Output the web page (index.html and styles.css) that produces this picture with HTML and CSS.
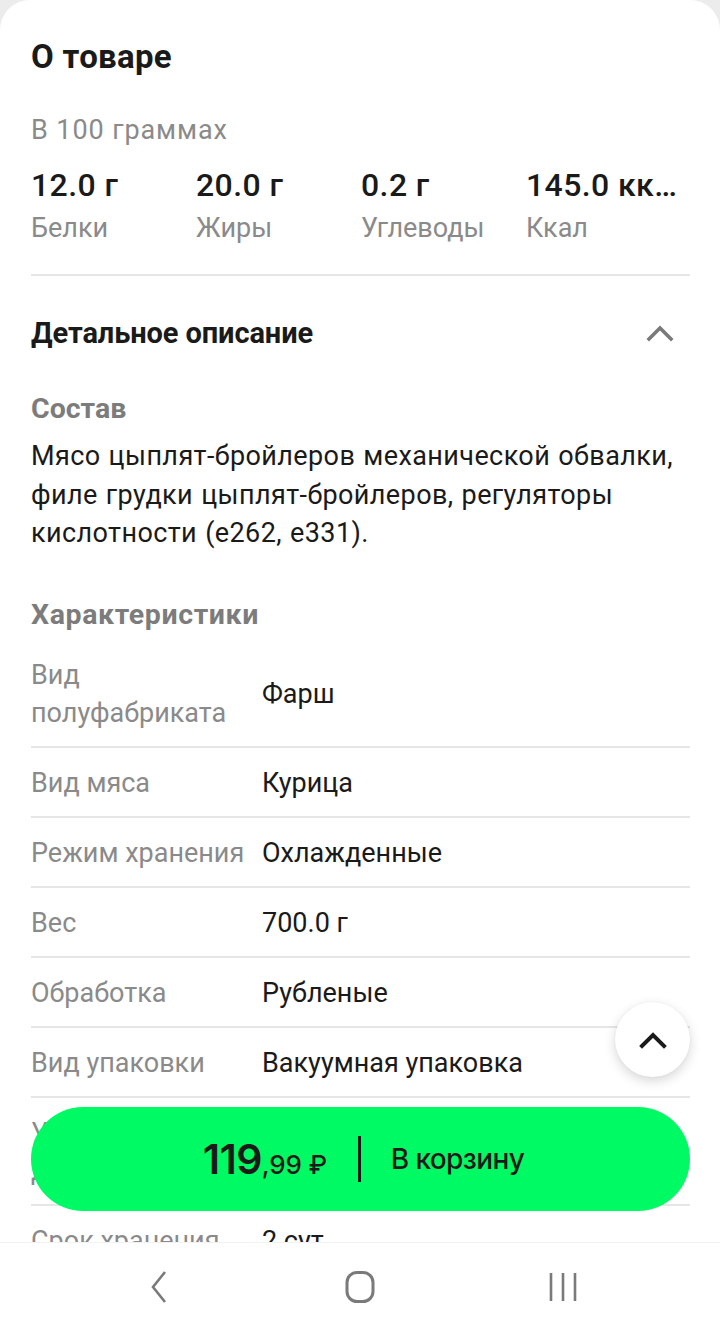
FILE: index.html
```html
<!DOCTYPE html>
<html lang="ru">
<head>
<meta charset="utf-8">
<title>О товаре</title>
<link rel="stylesheet" href="styles.css">
</head>
<body>
<div class="screen">
  <main class="card">
    <h1 class="title">О товаре</h1>
    <div class="per100">В 100 граммах</div>
    <div class="nutrients">
      <div class="nutrient"><div class="nv">12.0 г</div><div class="nl">Белки</div></div>
      <div class="nutrient"><div class="nv">20.0 г</div><div class="nl">Жиры</div></div>
      <div class="nutrient"><div class="nv">0.2 г</div><div class="nl">Углеводы</div></div>
      <div class="nutrient"><div class="nv">145.0 ккал</div><div class="nl">Ккал</div></div>
    </div>
    <div class="sep"></div>
    <div class="acc-head">
      <h2 class="acc-title">Детальное описание</h2>
      <svg class="acc-chevron" width="28" height="18" viewBox="0 0 28 18"><path d="M3 15 L14 4 L25 15" fill="none" stroke="#7a7a7a" stroke-width="3.6" stroke-linecap="square" stroke-linejoin="miter"/></svg>
    </div>
    <h3 class="sub">Состав</h3>
    <p class="composition">Мясо цыплят-бройлеров механической обвалки, филе грудки цыплят-бройлеров, регуляторы кислотности (e262, e331).</p>
    <h3 class="sub sub-specs">Характеристики</h3>
    <div class="specs">
      <div class="row"><div class="k">Вид<br>полуфабриката</div><div class="v">Фарш</div></div>
      <div class="row"><div class="k">Вид мяса</div><div class="v">Курица</div></div>
      <div class="row"><div class="k">Режим хранения</div><div class="v">Охлажденные</div></div>
      <div class="row"><div class="k">Вес</div><div class="v">700.0 г</div></div>
      <div class="row"><div class="k">Обработка</div><div class="v">Рубленые</div></div>
      <div class="row"><div class="k">Вид упаковки</div><div class="v">Вакуумная упаковка</div></div>
      <div class="row"><div class="k">Условия<br>Доставки</div><div class="v">Охлажденные</div></div>
      <div class="row"><div class="k">Срок хранения</div><div class="v">2 сут</div></div>
      <div class="row"><div class="k">Страна</div><div class="v">Россия</div></div>
    </div>
  </main>

  <button class="fab" aria-label="Наверх">
    <svg width="30" height="20" viewBox="0 0 30 20"><path d="M4 16 L15 5 L26 16" fill="none" stroke="#1a1a1a" stroke-width="4" stroke-linecap="square"/></svg>
  </button>

  <button class="cart">
    <span class="price"><span class="rub">119</span><span class="kop">,99 ₽</span></span>
    <span class="cart-sep"></span>
    <span class="cart-label">В корзину</span>
  </button>

  <nav class="sysnav">
    <svg width="32" height="34" viewBox="0 0 32 34"><path d="M23 2 L11 17 L23 32" fill="none" stroke="#7a7a7a" stroke-width="2.6"/></svg>
    <svg width="32" height="34" viewBox="0 0 32 34"><rect x="3" y="2.5" width="26" height="29" rx="10" fill="none" stroke="#7a7a7a" stroke-width="3"/></svg>
    <svg width="32" height="34" viewBox="0 0 32 34"><path d="M5 3 V31 M17 3 V31 M29 3 V31" fill="none" stroke="#7a7a7a" stroke-width="2.6"/></svg>
  </nav>
</div>
</body>
</html>
```

FILE: styles.css
```css
* { box-sizing: border-box; }
html, body { margin: 0; padding: 0; }
body {
  background: #ececec;
  font-family: Roboto, "Noto Sans", sans-serif;
  color: #1a1a1a;
}
.screen {
  width: 720px;
  height: 1332px;
  overflow: hidden;
  position: relative;
}
.card {
  background: #fff;
  border-radius: 30px 30px 0 0;
  padding: 38px 30px 0 31px;
  min-height: 1332px;
}
.title {
  margin: 0;
  font-size: 33px;
  line-height: 38px;
  font-weight: 700;
  letter-spacing: 0.3px;
}
.per100 {
  margin-top: 36px;
  font-size: 27px;
  line-height: 36px;
  color: #8a8a8a;
  letter-spacing: 0.9px;
}
.nutrients {
  margin-top: 19px;
  display: grid;
  grid-template-columns: 165px 165px 165px 154px;
}
.nv {
  font-size: 32px;
  line-height: 36px;
  font-weight: 500;
  letter-spacing: 0.4px;
  white-space: nowrap;
  overflow: hidden;
  text-overflow: ellipsis;
}
.nl {
  margin-top: 7px;
  font-size: 27px;
  line-height: 36px;
  color: #8a8a8a;
}
.sep {
  margin-top: 28px;
  height: 2px;
  background: #e6e6e6;
}
.acc-head {
  margin-top: 38px;
  display: flex;
  align-items: center;
  justify-content: space-between;
  padding-right: 16px;
}
.acc-title {
  margin: 0;
  font-size: 29px;
  line-height: 38px;
  font-weight: 700;
  letter-spacing: -0.1px;
}
.sub {
  margin: 38px 0 0;
  font-size: 28.5px;
  line-height: 38px;
  font-weight: 700;
  color: #7c7c7c;
}
.composition {
  margin: 9px 0 0;
  font-size: 27px;
  line-height: 38.5px;
  letter-spacing: 0.4px;
  word-spacing: 1px;
}
.sub-specs { margin-top: 43px; letter-spacing: 0.6px; }
.specs { margin-top: 6px; }
.row {
  display: flex;
  align-items: center;
  padding: 16px 0 14px;
  border-bottom: 2px solid #e6e6e6;
  font-size: 27px;
  line-height: 38px;
}
.k {
  width: 231px;
  flex: none;
  color: #8a8a8a;
}
.v { color: #1a1a1a; }

.fab {
  position: absolute;
  left: 615px;
  top: 1002px;
  width: 75px;
  height: 75px;
  border-radius: 50%;
  border: none;
  background: #fff;
  box-shadow: 0 4px 12px rgba(0,0,0,0.16), 0 0 2px rgba(0,0,0,0.06);
  display: flex;
  align-items: center;
  justify-content: center;
  padding: 0;
}
.cart {
  position: absolute;
  left: 31px;
  top: 1107px;
  width: 659px;
  height: 104px;
  border: none;
  border-radius: 52px;
  background: #00fa64;
  display: flex;
  align-items: center;
  justify-content: center;
  padding: 0 0 0 6px;
  color: #1a1a1a;
  font-family: Inter, Roboto, sans-serif;
}
.price { display: flex; align-items: baseline; }
.rub {
  font-size: 41px;
  font-weight: 600;
  letter-spacing: -0.6px;
}
.kop {
  font-size: 26px;
  font-weight: 500;
  letter-spacing: -0.2px;
}
.cart-sep {
  width: 3px;
  height: 46px;
  background: #1a1a1a;
  margin: 0 30px 0 31px;
}
.cart-label {
  font-size: 28px;
  font-weight: 500;
  letter-spacing: -0.6px;
}
.sysnav {
  position: absolute;
  left: 0;
  right: 0;
  top: 1242px;
  height: 90px;
  background: #fff;
  border-top: 1px solid #f2f2f2;
  display: flex;
  align-items: center;
  justify-content: center;
  gap: 170px;
  padding-bottom: 2px;
}
```
